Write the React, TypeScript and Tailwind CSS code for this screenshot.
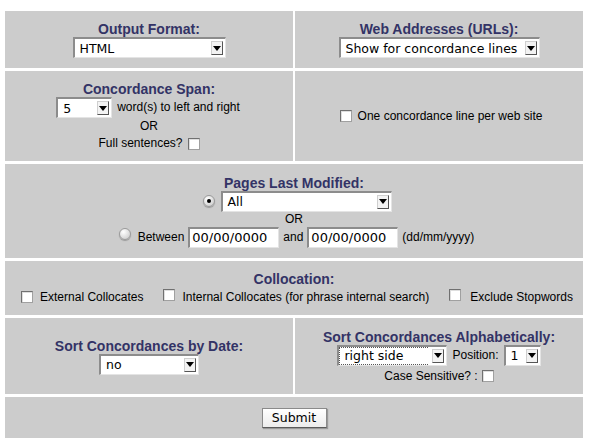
import React from "react";

const heading = "font-bold text-[14px] leading-[16px] text-[#333366]";
const cell = "bg-[#cccccc] flex flex-col items-center justify-center";

function FakeSelect({
  value,
  className,
  focus = false,
}: {
  value: string;
  className: string;
  focus?: boolean;
}) {
  return (
    <div
      className={`inline-flex h-[21px] items-stretch bg-white border-t-2 border-l-2 border-t-[#8c8c8c] border-l-[#8c8c8c] border-b border-r border-b-[#e4e4e4] border-r-[#e4e4e4] ${className}`}
    >
      <span className="flex-1 flex items-center overflow-hidden whitespace-nowrap pl-[1px] py-[1px]">
        <span
          className={`flex h-full flex-1 items-center pl-[4px] font-['DejaVu_Sans',sans-serif] text-[12.5px] text-black ${
            focus ? "outline-1 outline-dotted outline-[#555]" : ""
          }`}
        >
          {value}
        </span>
      </span>
      <span className="my-[2px] mr-[2px] ml-[3px] flex w-[12px] items-center justify-center border border-[#cfcfcf] border-r-[#555] border-b-[#555] bg-[#f3f3f3]">
        <span className="h-0 w-0 border-l-[4px] border-r-[4px] border-t-[5px] border-l-transparent border-r-transparent border-t-black" />
      </span>
    </div>
  );
}

function TextBox({ value }: { value: string }) {
  return (
    <div className="inline-flex h-[21px] w-[91px] items-center bg-white border-t-2 border-l-2 border-t-[#8c8c8c] border-l-[#8c8c8c] border-b border-r border-b-[#e4e4e4] border-r-[#e4e4e4] pl-[2px] font-['DejaVu_Sans',sans-serif] text-[13px] text-black">
      {value}
    </div>
  );
}

function Box() {
  return (
    <span className="inline-block h-[12px] w-[12px] shrink-0 border border-[#a0a0a0] border-t-[#707070] border-l-[#707070] bg-white shadow-[inset_1px_1px_0_#dedede]" />
  );
}

function Radio({ checked = false }: { checked?: boolean }) {
  return (
    <span className="inline-flex h-[12px] w-[12px] shrink-0 items-center justify-center rounded-full border border-[#9a9a9a] bg-[radial-gradient(circle_at_35%_30%,#ffffff,#c4c4c4)] shadow-[0_1px_1px_rgba(0,0,0,0.25)]">
      {checked && <span className="h-[4px] w-[4px] rounded-full bg-black" />}
    </span>
  );
}

export default function App() {
  return (
    <div className="min-h-[443px] w-[594px] bg-white pt-[11px] pl-[5px] font-['Liberation_Sans',Arial,sans-serif] text-[12px] leading-[15px] text-black">
      <div className="grid w-[578px] grid-cols-[288px_288px] grid-rows-[57px_90px_94px_54px_76px_41px] gap-x-[2px] gap-y-[3px]">
        {/* row 1 */}
        <div className={cell}>
          <div className={heading}>Output Format:</div>
          <FakeSelect value="HTML" className="w-[153px]" />
        </div>
        <div className={cell}>
          <div className={heading}>Web Addresses (URLs):</div>
          <FakeSelect value="Show for concordance lines" className="w-[201px]" />
        </div>

        {/* row 2 */}
        <div className={cell}>
          <div className={heading}>Concordance Span:</div>
          <div className="flex items-center gap-[5px] pr-[2px]">
            <FakeSelect value="5" className="w-[56px]" />
            <span>word(s) to left and right</span>
          </div>
          <div className="mt-[1px]">OR</div>
          <div className="mt-[2px] flex items-center gap-[5px]">
            <span>Full sentences?</span>
            <Box />
          </div>
        </div>
        <div className={cell}>
          <div className="flex items-center gap-[6px] pl-[4px]">
            <Box />
            <span>One concordance line per web site</span>
          </div>
        </div>

        {/* row 3 */}
        <div className={`${cell} col-span-2`}>
          <div className={heading}>Pages Last Modified:</div>
          <div className="flex items-center gap-[6px] pl-[6px]">
            <span className="-mt-[4px]">
              <Radio checked />
            </span>
            <FakeSelect value="All" className="w-[171px]" />
          </div>
          <div>OR</div>
          <div className="flex items-center gap-[4px] pl-[5px]">
            <span className="-mt-[3px] mr-[3px]">
              <Radio />
            </span>
            <span>Between</span>
            <TextBox value="00/00/0000" />
            <span>and</span>
            <TextBox value="00/00/0000" />
            <span>(dd/mm/yyyy)</span>
          </div>
        </div>

        {/* row 4 */}
        <div className={`${cell} col-span-2`}>
          <div className={heading}>Collocation:</div>
          <div className="mt-[2px] flex items-center pl-[6px]">
            <Box />
            <span className="ml-[7px]">External Collocates</span>
            <span className="ml-[20px]">
              <Box />
            </span>
            <span className="ml-[7px]">Internal Collocates (for phrase internal search)</span>
            <span className="ml-[20px]">
              <Box />
            </span>
            <span className="ml-[9px]">Exclude Stopwords</span>
          </div>
        </div>

        {/* row 5 */}
        <div className={cell}>
          <div className={heading}>Sort Concordances by Date:</div>
          <FakeSelect value="no" className="w-[100px]" />
        </div>
        <div className={cell}>
          <div className={heading}>Sort Concordances Alphabetically:</div>
          <div className="flex items-center gap-[5px]">
            <FakeSelect value="right side" className="w-[110px]" focus />
            <span>Position:</span>
            <FakeSelect value="1" className="w-[37px]" />
          </div>
          <div className="mt-[3px] flex items-center gap-[4px]">
            <span>Case Sensitive? :</span>
            <Box />
          </div>
        </div>

        {/* row 6 */}
        <div className={`${cell} col-span-2`}>
          <button className="h-[20px] w-[65px] border border-[#8a8a8a] border-b-[#5a5a5a] bg-[linear-gradient(#ffffff,#ececec)] font-['DejaVu_Sans',sans-serif] text-[12.5px] text-black shadow-[1px_1px_1px_rgba(0,0,0,0.25)]">
            Submit
          </button>
        </div>
      </div>
    </div>
  );
}
